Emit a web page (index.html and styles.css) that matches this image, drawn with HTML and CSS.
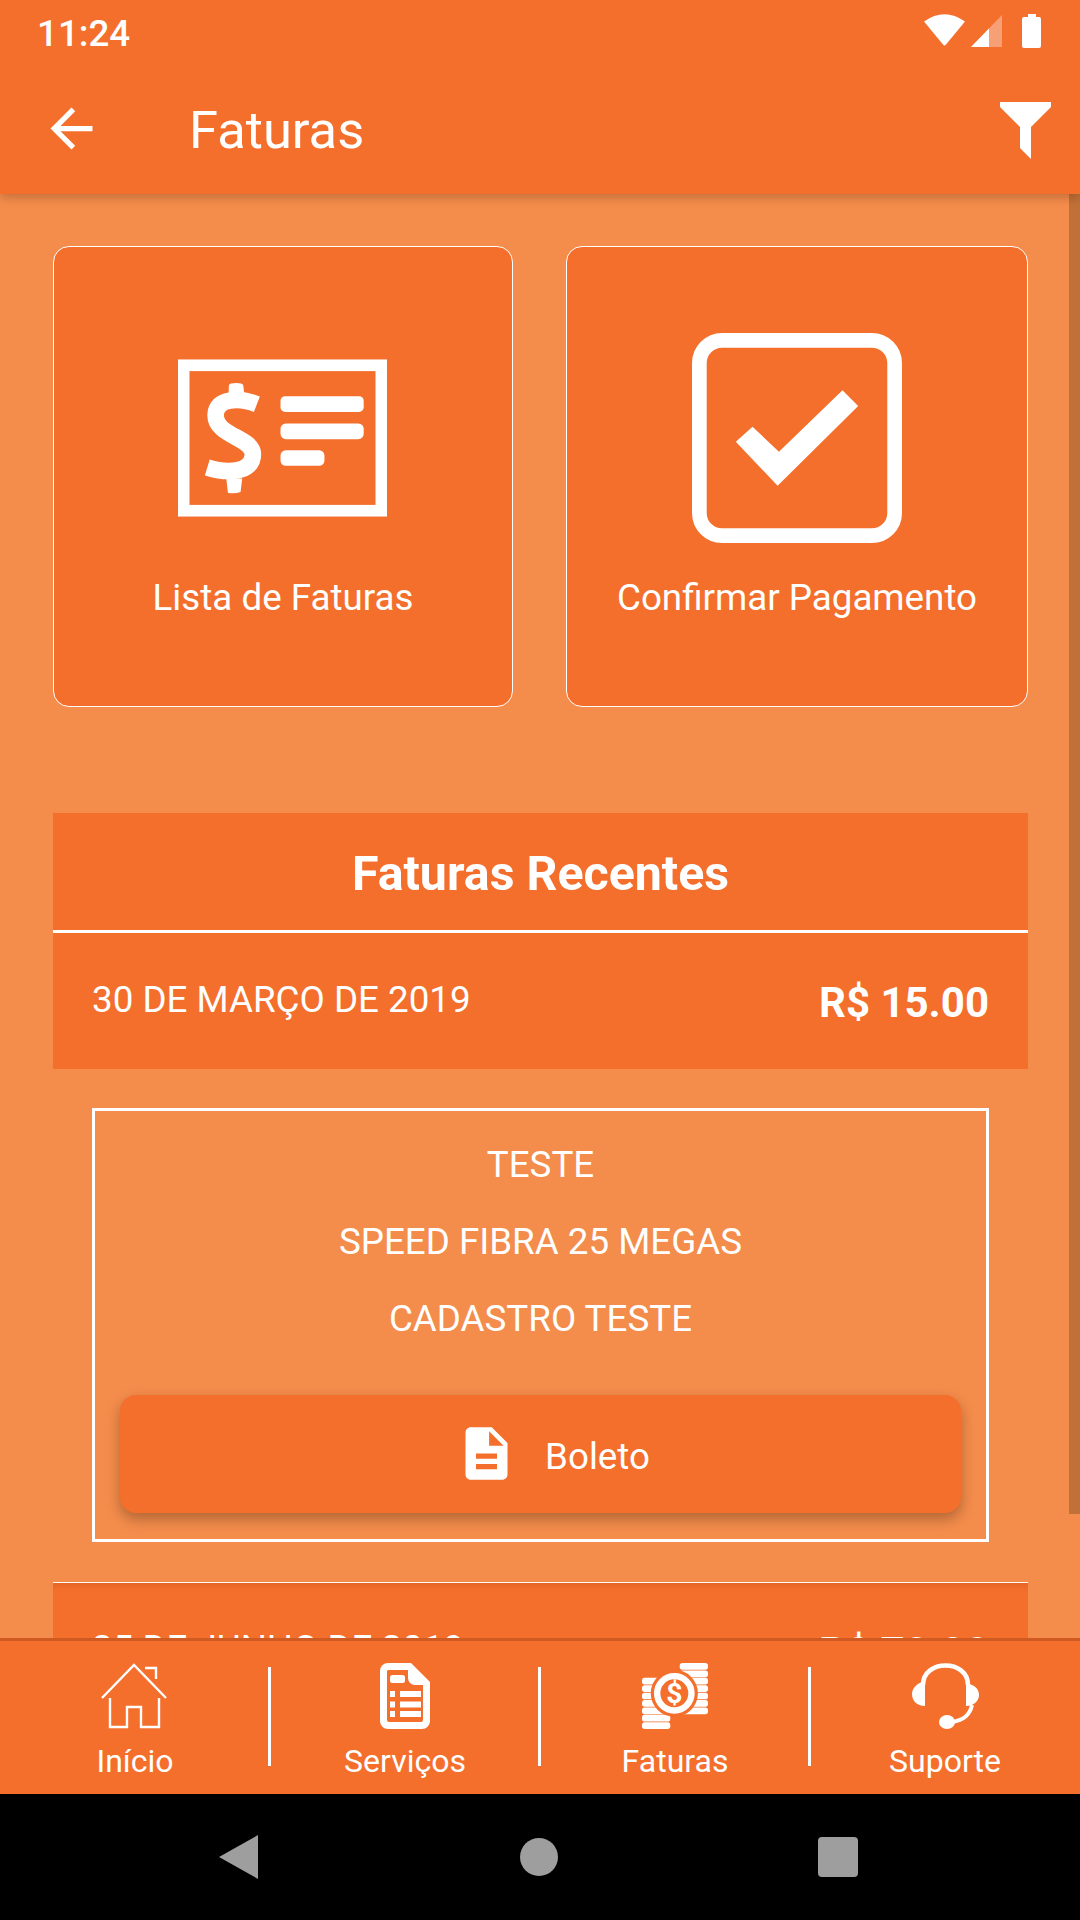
FILE: index.html
```html
<!DOCTYPE html>
<html lang="pt">
<head>
	<meta charset="UTF-8">
	<title>Faturas</title>
	<link rel="stylesheet" href="styles.css">
</head>
<body>
<header class="top">
	<div class="status">
		<span class="time">11:24</span>
		<svg class="status-icons" width="120" height="40" viewBox="924 12 120 40">
			<path fill="#fff" d="M924 21.500 Q944.500 7 965 21.500 L946 44.500 Q944.500 46.500 943 44.500 Z"/>
			<path fill="#fff" fill-opacity=".35" d="M971 47 L1002 15 V47 Z"/>
			<path fill="#fff" d="M971 47 L989 28.500 V47 Z"/>
			<path fill="#fff" d="M1028 14 h8 v3 h3 a2 2 0 0 1 2 2 V46 a2 2 0 0 1 -2 2 h-15 a2 2 0 0 1 -2 -2 V19 a2 2 0 0 1 2 -2 h4 z"/>
		</svg>
	</div>
	<div class="appbar">
		<svg class="back" width="63" height="63" viewBox="0 0 24 24"><path fill="#fff" d="M20 11H7.83l5.59-5.59L12 4l-8 8 8 8 1.41-1.41L7.83 13H20v-2z"/></svg>
		<h1>Faturas</h1>
		<svg class="filter" width="51" height="57" viewBox="1000 102 51 57"><path fill="#fff" d="M1000 102 H1051 V107 L1031 127 V159 L1020 148 V127 L1000 107 Z"/></svg>
	</div>
</header>

<main>
	<div class="scrollbar"></div>
	<div class="cards">
		<a class="card">
			<svg class="invoice" width="209" height="157" viewBox="115 148 628 471">
				<rect x="132" y="165" width="594" height="437" fill="none" stroke="#fff" stroke-width="35"/>
				<path fill="none" stroke="#fff" stroke-width="50" d="M352 282 C300 262 228 262 228 315 C228 378 340 382 340 432 C340 490 262 490 203 472"/>
				<path fill="#fff" d="M268 224 Q270 218 290 218 Q308 218 311 224 L316 268 H266 Z M260 505 H308 L303 546 Q285 552 265 548 Z"/>
				<rect x="423" y="258" width="250" height="47" rx="14" fill="#fff"/>
				<rect x="423" y="340" width="250" height="47" rx="16" fill="#fff"/>
				<rect x="423" y="420" width="132" height="47" rx="16" fill="#fff"/>
			</svg>
			<span>Lista de Faturas</span>
		</a>
		<a class="card">
			<svg width="210" height="210" viewBox="97 70 628 628">
				<rect x="119" y="92" width="584" height="584" rx="68" fill="none" stroke="#fff" stroke-width="44"/>
				<path fill="#fff" d="M228 395 L278 350 L357 425 L547 241 L594 288 L353 527 Z"/>
			</svg>
			<span>Confirmar Pagamento</span>
		</a>
	</div>

	<section class="recent">
		<h2>Faturas Recentes</h2>
		<div class="row">
			<span class="date">30 DE MARÇO DE 2019</span>
			<span class="price">R$ 15.00</span>
		</div>
		<div class="details">
			<p>TESTE</p>
			<p>SPEED FIBRA 25 MEGAS</p>
			<p>CADASTRO TESTE</p>
			<button type="button" class="boleto">
				<svg width="63" height="63" viewBox="0 0 24 24"><path fill="#fff" d="M14 2H6c-1.1 0-1.99.9-1.99 2L4 20c0 1.1.89 2 1.99 2H18c1.1 0 2-.9 2-2V8l-6-6zm2 16H8v-2h8v2zm0-4H8v-2h8v2zm-3-5V3.5L18.5 9H13z"/></svg>
				<span>Boleto</span>
			</button>
		</div>
		<div class="row next">
			<span class="date">25 DE JUNHO DE 2019</span>
			<span class="price">R$ 70.00</span>
		</div>
	</section>
</main>

<nav class="tabs">
	<a class="tab">
		<svg class="home" width="66" height="66" viewBox="0 0 66 66">
			<path fill="none" stroke="#fff" stroke-width="2.4" d="M1 35 L33 2 L65 35 M44 5 H55 V16 M9 35 V64 H26 V44 H40 V64 H58 V35"/>
		</svg>
		<span>Início</span>
	</a>
	<a class="tab">
		<svg width="50" height="66" viewBox="0 0 50 66">
			<path fill="#fff" d="M8 0 H31 L50 19 V58 a8 8 0 0 1 -8 8 H8 a8 8 0 0 1 -8 -8 V8 a8 8 0 0 1 8 -8 Z"/>
			<path fill="#f46e2c" d="M8 7 H28 V15 a7 7 0 0 0 7 7 H43 V57 a2 2 0 0 1 -2 2 H9 a2 2 0 0 1 -2 -2 V8 Z"/>
			<rect x="10" y="12" width="15" height="8" rx="2.500" fill="#fff"/>
			<path fill="#fff" d="M10 28 h5 v6 h-5 z M20 28 h21 v6 h-21 z M10 38.500 h5 v6 h-5 z M20 38.500 h21 v6 h-21 z M10 48 h5 v6 h-5 z M20 48 h21 v6 h-21 z"/>
		</svg>
		<span>Serviços</span>
	</a>
	<a class="tab">
		<svg width="66" height="66" viewBox="126 40 196 196">
			<g fill="#fff">
				<rect x="238" y="40" width="84" height="20" rx="8"/>
				<rect x="238" y="62" width="84" height="20" rx="8"/>
				<rect x="238" y="84" width="84" height="20" rx="8"/>
				<rect x="238" y="106" width="84" height="20" rx="8"/>
				<rect x="238" y="128" width="84" height="20" rx="8"/>
				<rect x="238" y="150" width="84" height="20" rx="8"/>
				<rect x="238" y="172" width="84" height="20" rx="8"/>
				<rect x="126" y="84" width="84" height="20" rx="8"/>
				<rect x="126" y="106" width="84" height="20" rx="8"/>
				<rect x="126" y="128" width="84" height="20" rx="8"/>
				<rect x="126" y="150" width="84" height="20" rx="8"/>
				<rect x="126" y="172" width="84" height="20" rx="8"/>
				<rect x="126" y="194" width="84" height="20" rx="8"/>
				<rect x="126" y="216" width="84" height="20" rx="8"/>
			</g>
			<circle cx="222" cy="130" r="70" fill="#f46e2c"/>
			<circle cx="222" cy="130" r="51" fill="none" stroke="#fff" stroke-width="19"/>
			<text x="222" y="160" text-anchor="middle" class="coin">$</text>
		</svg>
		<span>Faturas</span>
	</a>
	<a class="tab">
		<svg width="67" height="66" viewBox="0 0 67 66">
			<path fill="none" stroke="#fff" stroke-width="4.500" d="M11 22 C11 -4 56 -4 56 22"/>
			<path fill="#fff" d="M13 18 C4 20 0 26 0 31 C0 38 5 43 13 43 Z M54 20 C63 22 67 26 67 32 C67 38 62 43 54 43 Z"/>
			<path fill="none" stroke="#fff" stroke-width="4" d="M60 42 C58 52 52 57 40 59"/>
			<ellipse cx="35" cy="59" rx="8" ry="7" fill="#fff"/>
		</svg>
		<span>Suporte</span>
	</a>
</nav>

<div class="navbar">
	<svg width="40" height="44" viewBox="0 0 40 44"><path fill="#9e9e9e" d="M39 0 V44 L0 22 Z"/></svg>
	<span class="nav-circle"></span>
	<span class="nav-square"></span>
</div>
</body>
</html>
```

FILE: styles.css
```css
* {
	box-sizing: border-box;
}

html, body {
	margin: 0;
	padding: 0;
}

body {
	width: 1080px;
	height: 1920px;
	display: flex;
	flex-direction: column;
	overflow: hidden;
	background: #000;
	color: #fff;
	font-family: Roboto, "Noto Sans", sans-serif;
}

/* top bars */
.top {
	position: relative;
	z-index: 2;
	height: 194px;
	flex: none;
	background: #f46e2c;
	box-shadow: 0 3px 10px rgba(0, 0, 0, .22);
}

.status {
	height: 63px;
	display: flex;
	justify-content: space-between;
	padding: 12px 36px 0 37px;
}

.time {
	font-size: 36.750px;
	font-weight: 500;
	line-height: 44px;
}

.appbar {
	height: 131px;
	display: flex;
	align-items: center;
	padding: 0 29px 0 40px;
}

.appbar .back {
	margin-top: -1px;
}

.appbar h1 {
	margin: 3px 0 0 86px;
	flex: 1;
	font-size: 52.500px;
	font-weight: 400;
}

.filter {
	margin-top: 3px;
}

/* page body */
main {
	position: relative;
	flex: 1;
	min-height: 0;
	overflow: hidden;
	background: #f48c4b;
	padding: 52px 52px 0 53px;
}

.scrollbar {
	position: absolute;
	top: 0;
	right: 0;
	width: 11px;
	height: 1320px;
	background: #c17038;
}

.cards {
	display: grid;
	grid-template-columns: 460px 462px;
	justify-content: space-between;
}

.card {
	height: 461px;
	display: flex;
	flex-direction: column;
	align-items: center;
	background: #f46e2c;
	border: 1px solid #fff;
	border-radius: 16px;
	font-size: 36.750px;
}

.card svg {
	margin-top: 86px;
	height: 210px;
}

.card .invoice {
	margin-left: -2px;
}

.card span {
	margin-top: 33px;
}

.recent {
	margin-top: 106px;
}

.recent h2 {
	margin: 0;
	height: 120px;
	padding-top: 4px;
	display: flex;
	align-items: center;
	justify-content: center;
	background: #f46e2c;
	border-bottom: 3px solid #fff;
	font-size: 48.300px;
	font-weight: 700;
}

.row {
	height: 136px;
	display: flex;
	justify-content: space-between;
	align-items: center;
	padding: 0 39px;
	background: #f46e2c;
}

.date {
	font-size: 36.750px;
	margin-top: -4px;
}

.price {
	font-size: 42px;
	font-weight: 700;
	margin-top: 2px;
}

.details {
	margin: 39px 39px 40px;
	height: 434px;
	border: 3px solid #fff;
	padding: 15px 25px 0;
	text-align: center;
	font-size: 36.750px;
}

.details p {
	margin: 0;
	height: 77px;
	line-height: 77px;
}

.boleto {
	width: 100%;
	height: 118px;
	margin-top: 38px;
	padding: 0 0 0 24px;
	display: flex;
	align-items: center;
	justify-content: center;
	gap: 27px;
	border: 0;
	border-radius: 16px;
	background: #f46e2c;
	color: #fff;
	font: inherit;
	box-shadow: 0 6px 14px rgba(0, 0, 0, .28);
}

.boleto svg {
	margin-top: -2px;
}

.boleto span {
	margin-top: 4px;
}

.next {
	border-top: 1px solid #fff;
	box-shadow: inset 0 8px 6px -6px rgba(160, 70, 20, .25);
	align-items: flex-start;
	padding-top: 48px;
}

.next .price {
	margin-top: -3px;
}

/* bottom tabs */
.tabs {
	position: relative;
	z-index: 2;
	height: 156px;
	flex: none;
	display: grid;
	grid-template-columns: repeat(4, 1fr);
	background: #f46e2c;
	border-top: 3px solid #cf5a22;
}

.tab {
	position: relative;
	display: flex;
	flex-direction: column;
	align-items: center;
	padding-top: 22px;
	font-size: 32px;
}

.tab .home {
	margin-left: -2px;
}

.tab span {
	margin-top: 13px;
}

.tab:not(:last-child)::after {
	content: "";
	position: absolute;
	top: 26px;
	right: -1px;
	width: 3px;
	height: 99px;
	background: #fff;
}

.coin {
	font-size: 84px;
	font-weight: 700;
	fill: #fff;
}

/* android buttons */
.navbar {
	height: 126px;
	flex: none;
	background: #000;
	display: grid;
	grid-template-columns: repeat(3, 40px);
	justify-content: space-between;
	align-items: center;
	justify-items: center;
	padding: 0 222px 0 219px;
}

.nav-circle {
	width: 38px;
	height: 38px;
	border-radius: 50%;
	background: #9e9e9e;
}

.nav-square {
	width: 40px;
	height: 40px;
	border-radius: 4px;
	background: #9e9e9e;
}
```
